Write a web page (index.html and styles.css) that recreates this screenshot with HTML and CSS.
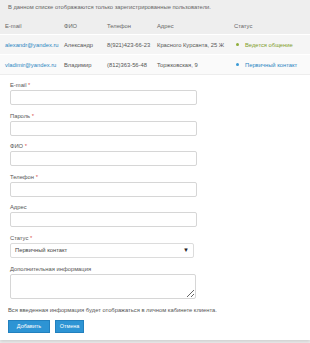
FILE: index.html
```html
<!doctype html>
<html>
	<head>
		<title>Пользователи</title>
		<meta charset="utf-8">
		<link rel="stylesheet" href="styles.css">
	</head>
	<body>
		<div class="notice">В данном списке отображаются только зарегистрированные пользователи.</div>

		<table class="users">
			<tr class="head">
				<td class="c1">E-mail</td>
				<td class="c2">ФИО</td>
				<td class="c3">Телефон</td>
				<td class="c4">Адрес</td>
				<td>Статус</td>
			</tr>
			<tr class="row odd">
				<td><a href="#">alexandr@yandex.ru</a></td>
				<td>Александр</td>
				<td>8(921)423-66-23</td>
				<td>Красного Курсанта, 25 Ж</td>
				<td class="status green"><span class="dot"></span>Ведется общение</td>
			</tr>
			<tr class="row even">
				<td><a href="#">vladimir@yandex.ru</a></td>
				<td>Владимир</td>
				<td>(812)363-56-48</td>
				<td>Торжковская, 9</td>
				<td class="status blue"><span class="dot"></span>Первичный контакт</td>
			</tr>
		</table>

		<div class="card">
			<div class="field">
				<label>E-mail <b>*</b></label>
				<input class="inp" type="text">
			</div>
			<div class="field">
				<label>Пароль <b>*</b></label>
				<input class="inp" type="password">
			</div>
			<div class="field">
				<label>ФИО <b>*</b></label>
				<input class="inp" type="text">
			</div>
			<div class="field">
				<label>Телефон <b>*</b></label>
				<input class="inp" type="text">
			</div>
			<div class="field">
				<label>Адрес</label>
				<input class="inp" type="text">
			</div>
			<div class="field">
				<label>Статус <b>*</b></label>
				<div class="select"><span>Первичный контакт</span><i>▼</i></div>
			</div>
			<div class="field">
				<label>Дополнительная информация</label>
				<textarea class="area"></textarea>
			</div>

			<p class="hint">Вся введенная информация будет отображаться в личном кабинете клиента.</p>

			<div class="buttons">
				<button class="btn add">Добавить</button>
				<button class="btn cancel">Отмена</button>
			</div>
		</div>
	</body>
</html>
```

FILE: styles.css
```css
body{
	margin:0px;
	padding:0px;
	background:#eeeeee;
	font-family:"Liberation Sans", Arial, sans-serif;
	font-size:5.8px;
	color:#555;
}

.notice{
	height:17px;
	line-height:14px;
	padding-left:8px;
	color:#666;
}

/** таблица пользователей **/
.users{
	width:100%;
	border-collapse:collapse;
	table-layout:fixed;
}
.users td{
	padding:0 0 0 5px;
	white-space:nowrap;
	overflow:hidden;
}
.users .c1{ width:54px; }
.users .c2{ width:38px; }
.users .c3{ width:45px; }
.users .c4{ width:72px; }

.head td{
	height:17px;
	color:#666;
}
.row td{
	height:19px;
	border-top:1px solid #fff;
}
.odd{ background:#f5f5f5; }
.even{ background:#fafafa; }

.users a{
	color:#2a86c2;
	text-decoration:none;
}

.status .dot{
	display:inline-block;
	width:3px;
	height:3px;
	border-radius:50%;
	margin:0 6px 1px 2px;
	vertical-align:middle;
}
.green{ color:#7f9d2a; }
.green .dot{ background:#8fae3a; }
.blue{ color:#2a86c2; }
.blue .dot{ background:#3a9ad6; }

/** форма **/
.card{
	margin-top:1px;
	background:#fff;
	padding:5px 8px 5px 8px;
	box-shadow:0 2px 3px rgba(0,0,0,0.12);
	margin-bottom:4px;
}

.field{
	padding-left:2px;
	margin-bottom:5.6px;
}
.field label{
	display:block;
	height:10px;
	line-height:10px;
	color:#555;
}
.field label b{
	font-weight:normal;
	color:#d9534f;
}

.inp{
	display:block;
	box-sizing:border-box;
	width:187px;
	height:15px;
	margin:0;
	border:1px solid #d6d6d6;
	border-radius:2px;
	background:#fff;
}

.select{
	display:flex;
	justify-content:space-between;
	align-items:center;
	box-sizing:border-box;
	width:184px;
	height:15px;
	padding:0 4px 0 4px;
	border:1px solid #dcdcdc;
	border-radius:2px;
	color:#444;
}
.select i{
	font-style:normal;
	font-size:6px;
	color:#222;
}

.area{
	display:block;
	box-sizing:border-box;
	width:186px;
	height:25px;
	margin:0;
	border:1px solid #d6d6d6;
	border-radius:2px;
	resize:both;
}

.hint{
	margin:6px 0 0 0;
	line-height:10px;
	color:#555;
}

.buttons{
	display:flex;
	gap:5px;
	margin-top:5px;
	padding-bottom:2px;
}
.btn{
	height:13px;
	padding:0;
	border:1px solid #2280be;
	background:#2d94d4;
	color:#fff;
	font-family:"Liberation Sans", Arial, sans-serif;
	font-size:5.5px;
	line-height:11px;
}
.add{ width:42px; }
.cancel{ width:29px; }
```
